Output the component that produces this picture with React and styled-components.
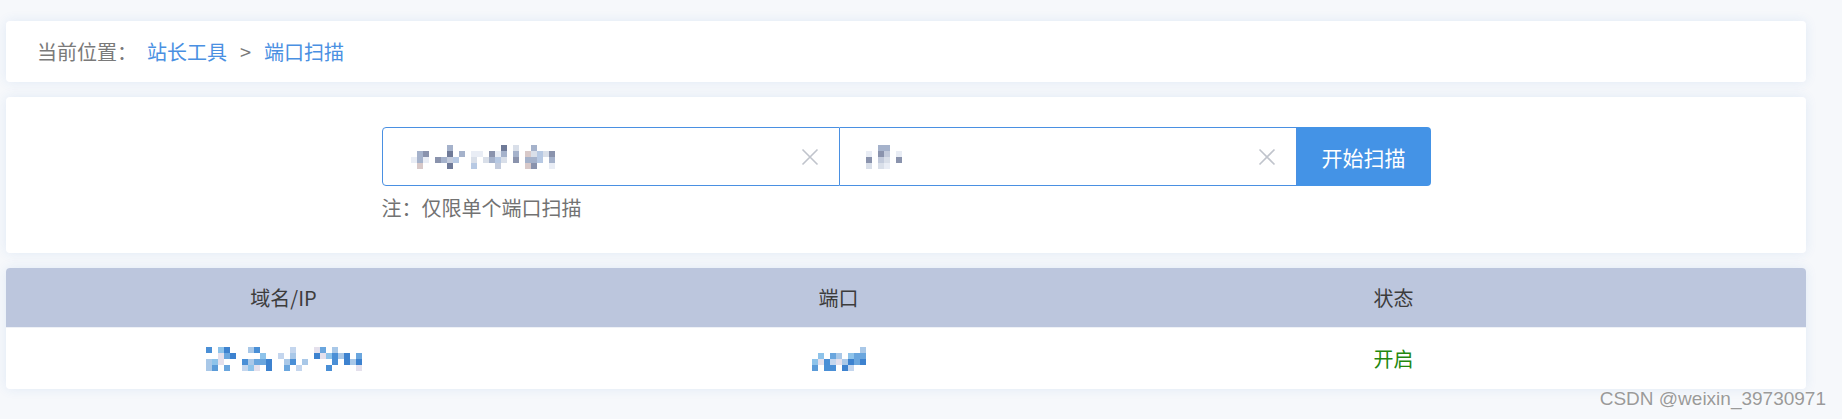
import React, { useMemo } from "react";
import styled, { createGlobalStyle } from "styled-components";

const GlobalStyle = createGlobalStyle`
  body {
    margin: 0;
    background: #f6f8fb;
    font-family: "Noto Sans CJK SC", "Noto Sans", sans-serif;
  }
`;

// small seeded random, so the mosaics look the same on every run
const makeRandom = (seed) => () => {
  seed = (seed + 0x6d2b79f5) | 0;
  let t = Math.imul(seed ^ (seed >>> 15), 1 | seed);
  t = (t + Math.imul(t ^ (t >>> 7), 61 | t)) ^ t;
  return ((t ^ (t >>> 14)) >>> 0) / 4294967296;
};

const GREY_PIXELS = ["#8a93ad", "#6f7a98", "#c3cbdc", "#d9dfe9", "#a5b2cb", "#d8c9c9", "#e9edf5", "#b7c9e3"];
const BLUE_PIXELS = ["#4a8fd6", "#6aa6de", "#8ec3ea", "#c4d6ee", "#3d82cf", "#a9c8e8", "#e4e0ec", "#5b9bd8"];

const Mosaic = ({ cols, rows, cell = 6, palette, seed, gaps = [] }) => {
  const cells = useMemo(() => {
    const rand = makeRandom(seed);
    const out = [];
    for (let r = 0; r < rows; r++) {
      for (let c = 0; c < cols; c++) {
        if (gaps.includes(c)) continue;
        const edge = r === 0 || r === rows - 1;
        if (rand() > (edge ? 0.35 : 0.72)) continue;
        out.push({ x: c * cell, y: r * cell, fill: palette[Math.floor(rand() * palette.length)] });
      }
    }
    return out;
  }, [cols, rows, cell, palette, seed, gaps]);

  return (
    <svg width={cols * cell} height={rows * cell} style={{ display: "block" }}>
      {cells.map((p, i) => (
        <rect key={i} x={p.x} y={p.y} width={cell} height={cell} fill={p.fill} />
      ))}
    </svg>
  );
};

const ClearIcon = () => (
  <svg width="18" height="18" viewBox="0 0 18 18">
    <path d="M1.5 1.5 L16.5 16.5 M16.5 1.5 L1.5 16.5" stroke="#c0c4cc" strokeWidth="1.6" fill="none" />
  </svg>
);

const App = () => {
  return (
    <>
      <GlobalStyle />
      <Page>
        <BreadcrumbCard>
          <CrumbLabel>当前位置：</CrumbLabel>
          <CrumbLink>站长工具</CrumbLink>
          <CrumbSep>&gt;</CrumbSep>
          <CrumbLink>端口扫描</CrumbLink>
        </BreadcrumbCard>

        <SearchCard>
          <SearchForm>
            <SearchBar>
              <Field $first>
                <Mosaic cols={25} rows={4} palette={GREY_PIXELS} seed={11} gaps={[4, 10, 17]} />
                <ClearButton>
                  <ClearIcon />
                </ClearButton>
              </Field>
              <Field>
                <FieldValue>
                  <Mosaic cols={7} rows={4} palette={GREY_PIXELS} seed={5} />
                </FieldValue>
                <ClearButton>
                  <ClearIcon />
                </ClearButton>
              </Field>
              <ScanButton>开始扫描</ScanButton>
            </SearchBar>
            <Note>注：仅限单个端口扫描</Note>
          </SearchForm>
        </SearchCard>

        <TableCard>
          <HeadCell>域名/IP</HeadCell>
          <HeadCell>端口</HeadCell>
          <HeadCell>状态</HeadCell>
          <HeadCell />
          <BodyCell>
            <Mosaic cols={26} rows={4} palette={BLUE_PIXELS} seed={23} gaps={[5, 11, 17]} />
          </BodyCell>
          <BodyCell>
            <Mosaic cols={9} rows={4} palette={BLUE_PIXELS} seed={41} />
          </BodyCell>
          <BodyCell $status="open">开启</BodyCell>
          <BodyCell />
        </TableCard>

        <Watermark>CSDN @weixin_39730971</Watermark>
      </Page>
    </>
  );
};

const Page = styled.div`
  position: relative;
  display: flex;
  flex-direction: column;
  gap: 15px;
  padding: 21px 36px 30px 6px;
  box-sizing: border-box;
  min-height: 419px;
`;

const Card = styled.div`
  background: #ffffff;
  border-radius: 4px;
  box-shadow: 0 0 12px rgba(40, 110, 200, 0.1);
`;

const BreadcrumbCard = styled(Card)`
  height: 61px;
  display: flex;
  align-items: center;
  padding-left: 31px;
  font-size: 20px;
`;

const CrumbLabel = styled.span`
  color: #7a7a7a;
  margin-right: 10px;
`;

const CrumbLink = styled.span`
  color: #4a90e2;
`;

const CrumbSep = styled.span`
  color: #7a7a7a;
  margin: 0 13px;
`;

const SearchCard = styled(Card)`
  height: 156px;
  box-sizing: border-box;
  padding-top: 30px;
  display: flex;
  justify-content: center;
`;

const SearchForm = styled.div`
  width: 1049px;
  display: flex;
  flex-direction: column;
`;

const SearchBar = styled.div`
  display: flex;
  height: 59px;
`;

const Field = styled.div`
  flex: 1;
  display: flex;
  align-items: center;
  justify-content: space-between;
  padding: 0 20px 0 22px;
  border: 1px solid #4a90e2;
  border-left-width: ${(p) => (p.$first ? "1px" : "0")};
  border-radius: ${(p) => (p.$first ? "4px 0 0 4px" : "0")};
  background: #fff;
`;

const FieldValue = styled.div`
  padding-left: 4px;
`;

const ClearButton = styled.span`
  display: flex;
  align-items: center;
`;

const ScanButton = styled.button`
  width: 134px;
  border: none;
  border-radius: 0 4px 4px 0;
  background: #4493e6;
  color: #ffffff;
  font-family: inherit;
  font-size: 21px;
  cursor: pointer;
`;

const Note = styled.div`
  margin-top: 10px;
  font-size: 20px;
  line-height: 24px;
  color: #727272;
`;

const TableCard = styled(Card)`
  display: grid;
  grid-template-columns: repeat(3, 555px) 1fr;
  overflow: hidden;
`;

const HeadCell = styled.div`
  height: 59px;
  display: flex;
  align-items: center;
  justify-content: center;
  background: #bcc6dd;
  color: #3c3c3c;
  font-size: 20px;
`;

const BodyCell = styled.div`
  height: 61px;
  border-top: 1px solid #eef1f6;
  display: flex;
  align-items: center;
  justify-content: center;
  font-size: 20px;
  color: ${(p) => (p.$status === "open" ? "#23880f" : "#333")};
`;

const Watermark = styled.div`
  position: absolute;
  right: 16px;
  bottom: 9px;
  font-family: "Liberation Sans", Arial, sans-serif;
  font-size: 19px;
  color: #9a9a9a;
  text-shadow: 0 0 2px #fff;
`;

export default App;
